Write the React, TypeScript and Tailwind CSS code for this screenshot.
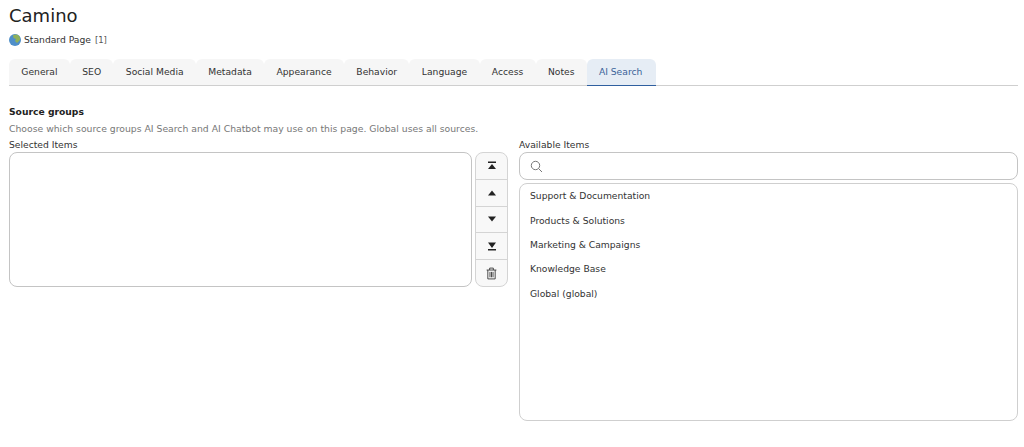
import React from "react";

const tabs = ["General", "SEO", "Social Media", "Metadata", "Appearance", "Behavior", "Language", "Access", "Notes"];
const items = ["Support & Documentation", "Products & Solutions", "Marketing & Campaigns", "Knowledge Base", "Global (global)"];

function Ico({ d }: { d: string }) {
  return (
    <svg width="12" height="12" viewBox="0 0 12 12" fill="#222">
      <path d={d} />
    </svg>
  );
}

export default function App() {
  return (
    <div className="w-[1024px] h-[447px] overflow-hidden bg-white pl-[9px] pr-[6px] text-[#333] text-[9.2px] leading-[14px] font-['DejaVu_Sans',sans-serif]">
      <h1 className="pt-[5px] text-[18px] leading-[22px] text-[#222]">Camino</h1>
      <div className="mt-[6px] flex h-[14px] items-center gap-[3px] text-[#333]">
        <svg width="12" height="12" viewBox="0 0 12 12">
          <circle cx="6" cy="6" r="6" fill="#4f8fc9" />
          <path d="M4 1 8 .6c2.500 1 3.600 3.400 3 5.400L8 9 6 7 7 5 4.500 4Z" fill="#8fb15a" />
        </svg>
        <span>
          Standard Page <span className="ml-[1px] text-[8.500px] text-[#555]">[1]</span>
        </span>
      </div>
      <div className="mt-[12px] flex h-[27px] border-b border-[#cfcfcf]">
        {tabs.map((t) => (
          <div key={t} className="flex h-[26px] items-center rounded-t-[6px] bg-[#f6f6f6] px-[12.350px] text-[#333]">
            {t}
          </div>
        ))}
        <div className="flex h-[27px] items-center rounded-t-[6px] border-b border-[#2f5f9f] bg-[#e6edf5] pl-[12px] pr-[14px] text-[#3b6399]">
          AI Search
        </div>
      </div>
      <div className="mt-[19px] font-bold text-[#222] leading-[14px]">Source groups</div>
      <div className="mt-[3px] text-[9.280px] text-[#777] leading-[14px]">
        Choose which source groups AI Search and AI Chatbot may use on this page. Global uses all sources.
      </div>
      <div className="mt-[2px] flex">
        <div className="w-[463px]">
          <div className="leading-[14px] text-[#333]">Selected Items</div>
          <div className="h-[135px] rounded-[8px] border border-[#c4c4c4] bg-white" />
        </div>
        <div className="ml-[3px] mt-[14px] flex h-[135px] w-[33px] flex-col rounded-[8px] border border-[#d4d4d4] bg-[#f8f8f8] divide-y divide-[#d4d4d4]">
          <div className="flex flex-1 items-center justify-center"><Ico d="M2 1.500h8v1.500H2zM6 4l4 5H2z" /></div>
          <div className="flex flex-1 items-center justify-center"><Ico d="M6 3.500l4 5H2z" /></div>
          <div className="flex flex-1 items-center justify-center"><Ico d="M2 3.500h8l-4 5z" /></div>
          <div className="flex flex-1 items-center justify-center"><Ico d="M2 2.500h8L6 8zM2 9h8v1.500H2z" /></div>
          <div className="flex flex-1 items-center justify-center">
            <svg width="13" height="13" viewBox="0 0 12 12" fill="none" stroke="#333" strokeWidth="0.8">
              <path d="M1.500 2.800h9M4.300 2.800V1h3.400v1.800M2.600 2.800v8.200h6.800V2.800M4.600 4.500v5M6 4.500v5M7.400 4.500v5" />
            </svg>
          </div>
        </div>
        <div className="ml-[11px] flex-1">
          <div className="leading-[14px] text-[#333]">Available Items</div>
          <div className="flex h-[28px] items-center rounded-[8px] border border-[#c4c4c4] pl-[10px]">
            <svg width="13" height="13" viewBox="0 0 13 13" fill="none" stroke="#777" strokeWidth="1">
              <circle cx="5.500" cy="5.500" r="4.200" />
              <path d="M8.500 8.500 12 12" />
            </svg>
          </div>
          <div className="mt-[3px] h-[238px] rounded-[8px] border border-[#cfcfcf] pl-[10px]">
            {items.map((i) => (
              <div key={i} className="flex h-[24.400px] items-center text-[#333]">{i}</div>
            ))}
          </div>
        </div>
      </div>
    </div>
  );
}
